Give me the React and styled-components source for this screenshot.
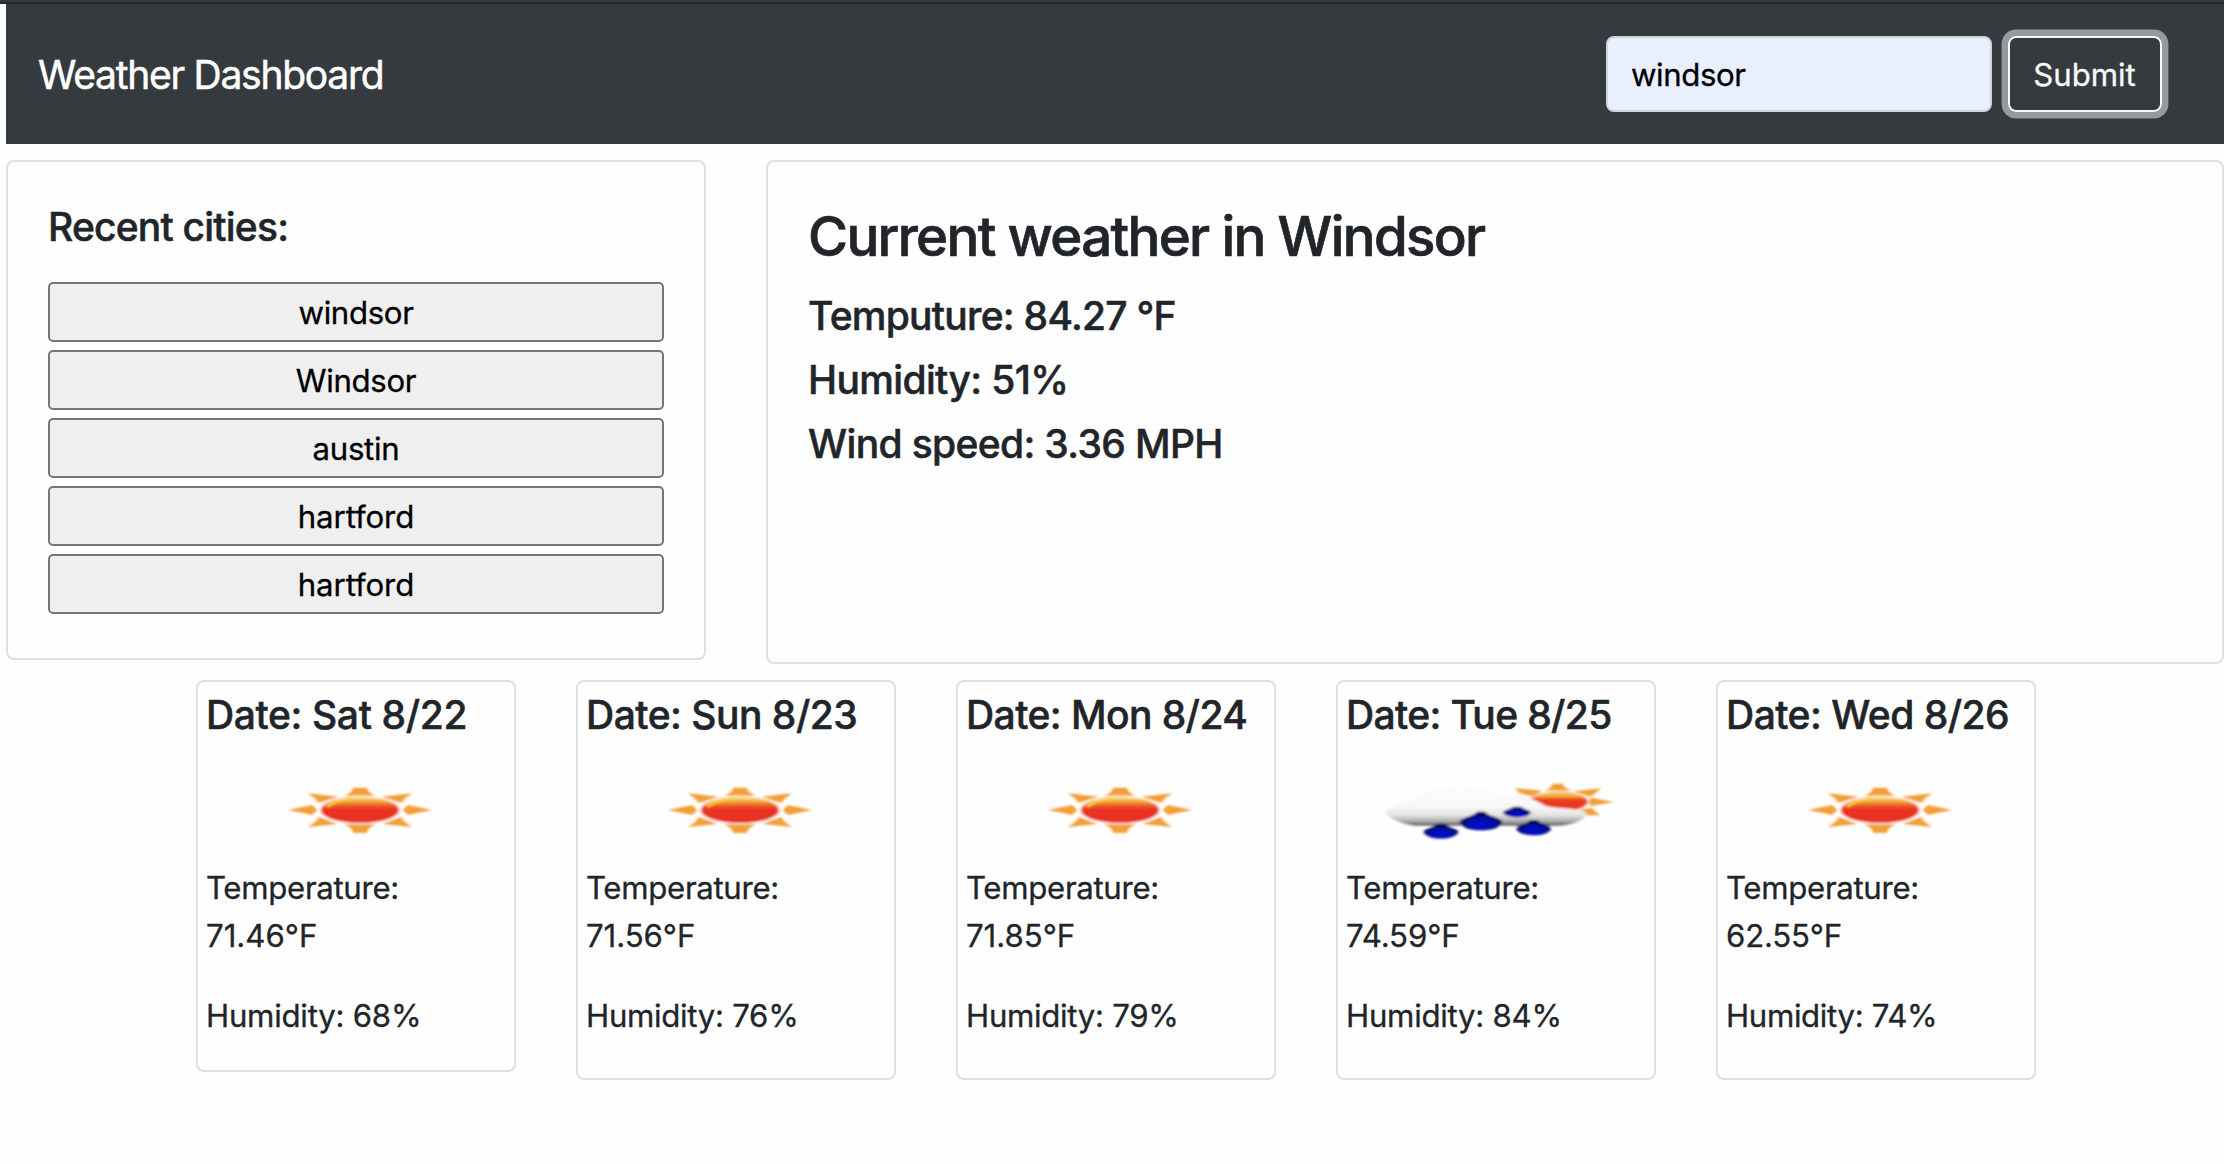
import React from "react";
import styled, { createGlobalStyle } from "styled-components";

const GlobalStyle = createGlobalStyle`
  *, *::before, *::after { box-sizing: border-box; }
  body {
    margin: 0;
    background: #fefefe;
    color: #212529;
    font-family: Inter, "Liberation Sans", sans-serif;
    font-size: 31.2px;
    font-weight: 400;
    line-height: 48px;
    overflow: hidden;
    -webkit-text-stroke: 0.3px currentColor;
  }
  h3, h5, p { margin: 0; }
`;

const TopEdge = styled.div`
  height: 4px;
  background: #353a3e;
  border-bottom: 2px solid #272626;
`;

const Page = styled.div`
  padding-left: 6px;
`;

const Navbar = styled.nav`
  display: flex;
  align-items: center;
  justify-content: space-between;
  height: 140px;
  padding: 0 62px 0 32px;
  background: #353a3e;
`;

const Brand = styled.span`
  padding-top: 2px;
  color: #fff;
  font-size: 39px;
  line-height: 60px;
  letter-spacing: ${(p) => p.$track}px;
  -webkit-text-stroke-width: 0.5px;
`;

const SearchForm = styled.form`
  display: flex;
  gap: 16px;
`;

const SearchInput = styled.input`
  width: 386px;
  height: 76px;
  padding: 2px 24px 0 23px;
  border: 2px solid #ced4da;
  border-radius: 8px;
  background: #e8f0fe;
  color: #000;
  font: inherit;
  letter-spacing: ${(p) => p.$track}px;
  outline: none;
`;

const SubmitButton = styled.button`
  width: 154px;
  height: 76px;
  padding: 2px 1px 0 0;
  border: 2px solid #f8f9fa;
  border-radius: 8px;
  background: transparent;
  box-shadow: 0 0 0 6.4px rgba(248, 249, 250, 0.5);
  color: #f8f9fa;
  font: inherit;
  letter-spacing: ${(p) => p.$track}px;
`;

const Overview = styled.div`
  display: flex;
  align-items: flex-start;
  gap: 60px;
  margin-top: 16px;
`;

const Card = styled.section`
  border: 2px solid #dfdfdf;
  border-radius: 8px;
  background: #fefefe;
`;

const RecentCard = styled(Card)`
  width: 700px;
  height: 500px;
  padding: 40px;
`;

const CurrentCard = styled(Card)`
  flex: 1;
  height: 504px;
  padding: 41px 40px 0;
`;

const Title = styled.h3`
  margin-bottom: 21px;
  font-size: 54.6px;
  font-weight: 500;
  line-height: 67px;
  letter-spacing: ${(p) => p.$track}px;
  -webkit-text-stroke-width: 0.7px;
`;

const Heading = styled.h5`
  padding-top: 2px;
  font-size: 39px;
  font-weight: 500;
  line-height: 46px;
  white-space: nowrap;
  letter-spacing: ${(p) => p.$track}px;
  -webkit-text-stroke-width: 0.5px;
`;

const Readings = styled.div`
  display: grid;
  gap: 16px;
`;

const CityList = styled.div`
  display: grid;
  gap: 8px;
  margin-top: 32px;
`;

const CityButton = styled.button`
  height: 60px;
  padding: 2px 0 0;
  border: 2px solid #767676;
  border-radius: 5px;
  background: #efefef;
  color: #000;
  font: inherit;
  letter-spacing: ${(p) => p.$track}px;
`;

const Forecast = styled.div`
  display: flex;
  align-items: flex-start;
  gap: 60px;
  margin-top: 16px;
  padding-left: 190px;
`;

const DayCard = styled(Card)`
  width: 320px;
  height: ${(p) => (p.$short ? 392 : 400)}px;
  padding: 8px;
`;

const Icon = styled.svg`
  display: block;
  width: 300px;
  height: 124px;
  margin-bottom: 2px;
`;

const Text = styled.p`
  letter-spacing: ${(p) => p.$track}px;
  & + & { margin-top: 32px; }
`;

const Line = styled.span`
  display: block;
  letter-spacing: ${(p) => p.$track}px;
`;

function SunIcon() {
  return (
    <Icon viewBox="0 0 300 124">
      <defs>
        <linearGradient id="sunBody" x1="0" y1="0" x2="0" y2="1">
          <stop offset="0" stopColor="#f9e08a" />
          <stop offset="0.14" stopColor="#f3b53f" />
          <stop offset="0.34" stopColor="#ec5a27" />
          <stop offset="0.46" stopColor="#ea3323" />
          <stop offset="1" stopColor="#ea3323" />
        </linearGradient>
        <filter id="sunSoft" x="-10%" y="-10%" width="120%" height="120%">
          <feGaussianBlur stdDeviation="4.2 2.6" />
        </filter>
      </defs>
      <g transform="translate(74 32) scale(0.33333)" filter="url(#sunSoft)">
        <g fill="#f29f38">
          <path d="M220 53H260L266 65L286 77H194L214 65Z" />
          <path d="M220 189H260L266 176L286 163H194L214 176Z" />
          <path d="M24 120L96 105L112 120L96 135Z" />
          <path d="M456 120L384 105L368 120L384 135Z" />
          <path d="M84 70L176 80L116 99L106 86Z" />
          <path d="M396 70L304 80L364 99L374 86Z" />
          <path d="M84 171L172 162L116 141L108 154Z" />
          <path d="M396 171L308 162L364 141L372 154Z" />
        </g>
        <ellipse cx="240" cy="120" rx="124" ry="43" fill="#fdf0e4" />
        <ellipse cx="240" cy="120" rx="117" ry="39" fill="url(#sunBody)" />
        <path d="M142 110Q160 92 216 86" fill="none" stroke="#f7c83c" strokeWidth="9" />
      </g>
    </Icon>
  );
}

function RainIcon() {
  const drops = [
    [213, 161, 206, 52],
    [333, 125, 181, 64],
    [441, 110, 142, 42],
    [491, 151, 196, 52],
  ];
  return (
    <Icon viewBox="0 0 300 124">
      <defs>
        <linearGradient id="rainSun" x1="0" y1="0" x2="0" y2="1">
          <stop offset="0" stopColor="#f5c95a" />
          <stop offset="0.22" stopColor="#f2b23d" />
          <stop offset="0.4" stopColor="#ea3d24" />
          <stop offset="1" stopColor="#ea3323" />
        </linearGradient>
        <linearGradient id="cloud" x1="0" y1="54" x2="0" y2="168" gradientUnits="userSpaceOnUse">
          <stop offset="0" stopColor="#fdfdfd" />
          <stop offset="0.5" stopColor="#f7f7f7" />
          <stop offset="0.72" stopColor="#e2e2e2" />
          <stop offset="0.88" stopColor="#aaaaaa" />
          <stop offset="1" stopColor="#4c4c4c" />
        </linearGradient>
        <radialGradient id="drop" cx="0.5" cy="0.68" r="0.55">
          <stop offset="0" stopColor="#0613d6" />
          <stop offset="0.55" stopColor="#040ba8" />
          <stop offset="1" stopColor="#02044f" />
        </radialGradient>
        <filter id="rainSoft" x="-10%" y="-10%" width="120%" height="120%">
          <feGaussianBlur stdDeviation="4.2 2.6" />
        </filter>
      </defs>
      <g transform="translate(24 32) scale(0.33333)" filter="url(#rainSoft)">
        <g fill="#f29f38">
          <path d="M548 41H578L584 51L602 62H526L543 51Z" />
          <path d="M434 54L516 62L490 80L450 70Z" />
          <path d="M694 55L608 64L662 80L676 70Z" />
          <path d="M732 96L664 83L652 96L664 108Z" />
          <path d="M690 136L664 113L620 121L650 136Z" />
        </g>
        <ellipse cx="566" cy="95" rx="92" ry="33" fill="#fdf0e4" />
        <ellipse cx="566" cy="95" rx="87" ry="30" fill="url(#rainSun)" />
        <path
          d="M46 126C56 110 96 100 130 92C154 66 204 56 268 56C326 55 368 72 394 86C428 74 480 80 516 102C532 120 612 110 648 128C650 148 610 167 560 168H134C94 162 56 146 46 126Z"
          fill="url(#cloud)"
          stroke="#eeeeee"
          strokeWidth="2"
        />
        {drops.map(([x, top, bottom, half]) => {
          const h = bottom - top;
          return (
            <path
              key={x}
              fill="url(#drop)"
              d={`M${x - 12} ${top}H${x + 12}C${x + 20} ${top + h * 0.26} ${x + half} ${top + h * 0.3} ${x + half} ${top + h * 0.58}C${x + half - 6} ${top + h * 0.86} ${x + half * 0.5} ${bottom} ${x} ${bottom}C${x - half * 0.5} ${bottom} ${x - half + 6} ${top + h * 0.86} ${x - half} ${top + h * 0.58}C${x - half} ${top + h * 0.3} ${x - 20} ${top + h * 0.26} ${x - 12} ${top}Z`}
            />
          );
        })}
      </g>
    </Icon>
  );
}

const cities = [
  { name: "windsor", track: -0.35 },
  { name: "Windsor", track: -0.35 },
  { name: "austin", track: -0.25 },
  { name: "hartford", track: -0.1 },
  { name: "hartford", track: -0.1 },
];

const readings = [
  { text: "Temputure: 84.27 °F", track: -0.74 },
  { text: "Humidity: 51%", track: -0.63 },
  { text: "Wind speed: 3.36 MPH", track: -0.65 },
];

const days = [
  { date: "Sat 8/22", temp: "71.46", humidity: 68, dateTrack: -0.38, tempTrack: 0, humTrack: -0.25, short: true },
  { date: "Sun 8/23", temp: "71.56", humidity: 76, dateTrack: -0.5, tempTrack: -0.08, humTrack: -0.3 },
  { date: "Mon 8/24", temp: "71.85", humidity: 79, dateTrack: -0.57, tempTrack: -0.05, humTrack: -0.3 },
  { date: "Tue 8/25", temp: "74.59", humidity: 84, dateTrack: -0.65, tempTrack: -0.12, humTrack: -0.27, rain: true },
  { date: "Wed 8/26", temp: "62.55", humidity: 74, dateTrack: -0.52, tempTrack: -0.2, humTrack: -0.35 },
];

export default function App() {
  return (
    <>
      <GlobalStyle />
      <TopEdge />
      <Page>
        <Navbar>
          <Brand $track={-1.26}>Weather Dashboard</Brand>
          <SearchForm onSubmit={(e) => e.preventDefault()}>
            <SearchInput defaultValue="windsor" $track={-0.4} />
            <SubmitButton $track={0}>Submit</SubmitButton>
          </SearchForm>
        </Navbar>
        <Overview>
          <RecentCard>
            <Heading $track={-0.8}>Recent cities:</Heading>
            <CityList>
              {cities.map((c, i) => (
                <CityButton key={i} $track={c.track}>{c.name}</CityButton>
              ))}
            </CityList>
          </RecentCard>
          <CurrentCard>
            <Title $track={-1.66}>Current weather in Windsor</Title>
            <Readings>
              {readings.map((r) => (
                <Heading key={r.text} $track={r.track}>{r.text}</Heading>
              ))}
            </Readings>
          </CurrentCard>
        </Overview>
        <Forecast>
          {days.map((d) => (
            <DayCard key={d.date} $short={d.short}>
              <Heading $track={d.dateTrack}>Date: {d.date}</Heading>
              {d.rain ? <RainIcon /> : <SunIcon />}
              <Text>
                <Line $track={-0.32}>Temperature:</Line>
                <Line $track={d.tempTrack}>{d.temp}°F</Line>
              </Text>
              <Text $track={d.humTrack}>Humidity: {d.humidity}%</Text>
            </DayCard>
          ))}
        </Forecast>
      </Page>
    </>
  );
}
